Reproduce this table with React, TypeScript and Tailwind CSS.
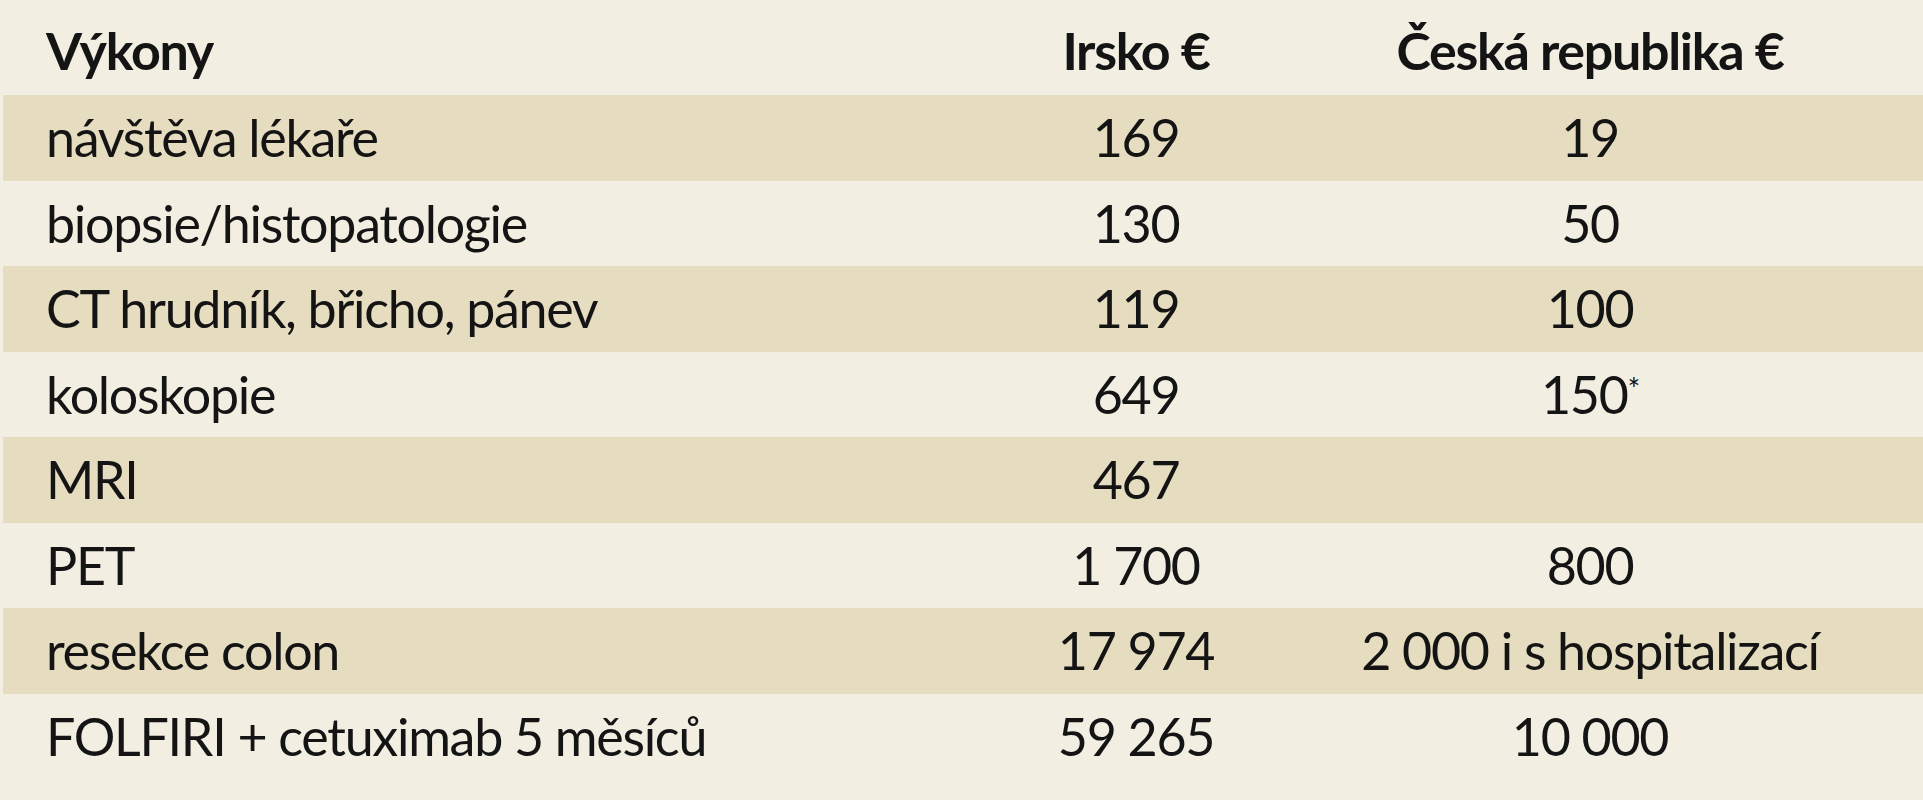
import React from 'react';

interface Row {
  label: string;
  ireland: string;
  czech: React.ReactNode;
}

const rows: Row[] = [
  { label: 'návštěva lékaře', ireland: '169', czech: '19' },
  { label: 'biopsie/histopatologie', ireland: '130', czech: '50' },
  { label: 'CT hrudník, břicho, pánev', ireland: '119', czech: '100' },
  {
    label: 'koloskopie',
    ireland: '649',
    czech: (
      <>
        150<span className="relative -top-[14px] text-[30px]">*</span>
      </>
    ),
  },
  { label: 'MRI', ireland: '467', czech: '' },
  { label: 'PET', ireland: '1 700', czech: '800' },
  { label: 'resekce colon', ireland: '17 974', czech: '2 000 i s hospitalizací' },
  { label: 'FOLFIRI + cetuximab 5 měsíců', ireland: '59 265', czech: '10 000' },
];

const cols = 'grid grid-cols-[933px_400px_508px]';

const App: React.FC = () => {
  return (
    <div
      className="w-[1923px] h-[800px] bg-[#f3eee2] pl-[3px] text-[#141414] overflow-hidden"
      style={{ fontFamily: 'Lato, "Open Sans", sans-serif' }}
    >
      {/* Header */}
      <div className="grid grid-cols-[933px_400px_508px] h-[95px] pt-[8px] text-[52px] leading-[85px] tracking-[-1.3px] font-bold">
        <div className="pl-[43px]">Výkony</div>
        <div className="text-center">Irsko €</div>
        <div className="text-center">Česká republika €</div>
      </div>

      {/* Body */}
      {rows.map((row, i) => (
        <div
          key={row.label}
          className={`${cols} h-[85.5px] text-[52px] leading-[85px] tracking-[-1.3px] ${i % 2 === 0 ? 'bg-[#e6dcbf]' : 'bg-[#f3eee2]'}`}
        >
          <div className="pl-[43px] whitespace-nowrap">{row.label}</div>
          <div className="text-center whitespace-nowrap">{row.ireland}</div>
          <div className="text-center whitespace-nowrap">{row.czech}</div>
        </div>
      ))}
    </div>
  );
};

export default App;
